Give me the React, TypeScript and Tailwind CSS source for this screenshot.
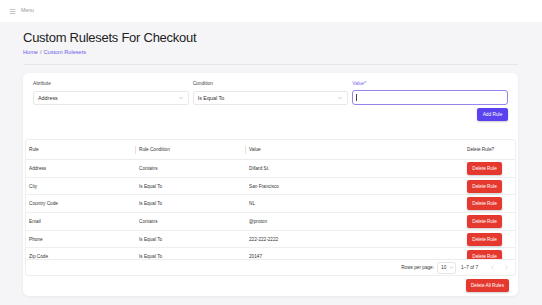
import React from "react";
import { Menu, ChevronDown, ChevronLeft, ChevronRight } from "lucide-react";

const rows = [
  { rule: "Address", cond: "Contains", value: "Dillard St." },
  { rule: "City", cond: "Is Equal To", value: "San Francisco" },
  { rule: "Country Code", cond: "Is Equal To", value: "NL" },
  { rule: "Email", cond: "Contains", value: "@proton" },
  { rule: "Phone", cond: "Is Equal To", value: "222-222-2222" },
  { rule: "Zip Code", cond: "Is Equal To", value: "20147" },
];

export default function App() {
  return (
    <div className="w-[542px] h-[305px] overflow-hidden bg-[#f5f5f7] font-['Liberation_Sans',Arial,sans-serif] text-[#333]">
      <header className="h-[22px] bg-white flex items-center pl-[9px] gap-[5px]">
        <Menu size={7} strokeWidth={2} className="text-[#9a9a9a]" />
        <span className="text-[5.2px] text-[#9a9a9a]">Menu</span>
      </header>
      <main className="pl-[23px] pr-[24px]">
        <h1 className="mt-[8px] text-[13px] leading-[16px] tracking-[-0.02em] text-[#222]">
          Custom Rulesets For Checkout
        </h1>
        <nav className="mt-[3px] text-[5.6px] leading-[7px] text-[#6c5ce7] flex gap-[2px]">
          <span>Home</span>
          <span className="text-[#777]">/</span>
          <span>Custom Rulesets</span>
        </nav>
        <div className="mt-[8px] ml-[1px] h-px bg-[#e6e6e8]" />
        <section className="mt-[8px] h-[223px] bg-white rounded-[6px] shadow-[0_1px_3px_rgba(0,0,0,0.06)] flex flex-col">
          <div className="pt-[8px] px-[10px]">
            <div className="grid grid-cols-3 gap-x-[4px]">
              <div className="flex flex-col">
                <label className="text-[4.8px] leading-[6px] text-[#444] mb-[4px]">Attribute</label>
                <div className="h-[14px] border border-[#e8e8e8] rounded-[2px] flex items-center px-[4px] text-[5.4px] text-[#333]">
                  <span className="flex-1">Address</span>
                  <ChevronDown size={6} className="text-[#999]" />
                </div>
              </div>
              <div className="flex flex-col">
                <label className="text-[4.8px] leading-[6px] text-[#444] mb-[4px]">Condition</label>
                <div className="h-[14px] border border-[#e8e8e8] rounded-[2px] flex items-center px-[4px] text-[5.4px] text-[#333]">
                  <span className="flex-1">Is Equal To</span>
                  <ChevronDown size={6} className="text-[#999]" />
                </div>
              </div>
              <div className="flex flex-col">
                <label className="text-[4.8px] leading-[6px] text-[#7a68e8] mb-[3px]">Value*</label>
                <div className="h-[15px] border-[1.5px] border-[#9485ea] rounded-[3px] flex items-center px-[3px]">
                  <span className="w-px h-[7px] bg-[#444]" />
                </div>
              </div>
            </div>
            <div className="flex justify-end mt-[3px]">
              <button className="w-[31px] h-[13px] rounded-[2px] bg-[#5a43ee] text-white text-[4.8px] shadow-[0_1px_2px_rgba(0,0,0,0.2)]">
                Add Rule
              </button>
            </div>
          </div>
          <div className="mt-[18px] mx-[2px] h-[137px] border border-[#eeeeee] rounded-[3px] flex flex-col">
            <div className="h-[20px] grid grid-cols-[110px_110px_218px_1fr] border-b border-[#ececec] text-[4.7px] text-[#333] items-center">
              <div className="pl-[3px] relative h-full flex items-center">
                Rule
                <span className="absolute right-0 top-[6px] h-[8px] w-px bg-[#e0e0e0]" />
              </div>
              <div className="pl-[3px] relative h-full flex items-center">
                Rule Condition
                <span className="absolute right-0 top-[6px] h-[8px] w-px bg-[#e0e0e0]" />
              </div>
              <div className="pl-[3px] h-full flex items-center">Value</div>
              <div className="pl-[3px] h-full flex items-center">Delete Rule?</div>
            </div>
            <div className="h-[99px] overflow-hidden">
              {rows.map((r) => (
                <div
                  key={r.rule}
                  className="h-[17.7px] grid grid-cols-[110px_110px_218px_1fr] border-b border-[#efefef] text-[4.7px] text-[#333] items-center"
                >
                  <div className="pl-[3px]">{r.rule}</div>
                  <div className="pl-[3px]">{r.cond}</div>
                  <div className="pl-[3px]">{r.value}</div>
                  <div className="pl-[3px]">
                    <button className="w-[35px] h-[13px] rounded-[2px] bg-[#e5392f] text-white text-[4.7px] shadow-[0_1px_2px_rgba(0,0,0,0.2)]">
                      Delete Rule
                    </button>
                  </div>
                </div>
              ))}
            </div>
            <div className="flex-1 border-t border-[#ececec] flex items-center justify-end text-[4.7px] text-[#333] pr-[5px]">
              <span>Rows per page:</span>
              <div className="ml-[3px] w-[19px] h-[12px] border border-[#e6e6e6] rounded-[2px] flex items-center pl-[3px] pr-[1px]">
                <span className="flex-1">10</span>
                <ChevronDown size={5} className="text-[#888]" />
              </div>
              <span className="ml-[5px]">1–7 of 7</span>
              <ChevronLeft size={7} className="ml-[11px] text-[#c4c4c4]" />
              <ChevronRight size={7} className="ml-[7px] text-[#c4c4c4]" />
            </div>
          </div>
          <div className="flex justify-end pr-[9px] mt-[3px]">
            <button className="w-[43px] h-[13px] rounded-[2px] bg-[#e5392f] text-white text-[4.7px] shadow-[0_1px_2px_rgba(0,0,0,0.2)]">
              Delete All Rules
            </button>
          </div>
        </section>
      </main>
    </div>
  );
}
